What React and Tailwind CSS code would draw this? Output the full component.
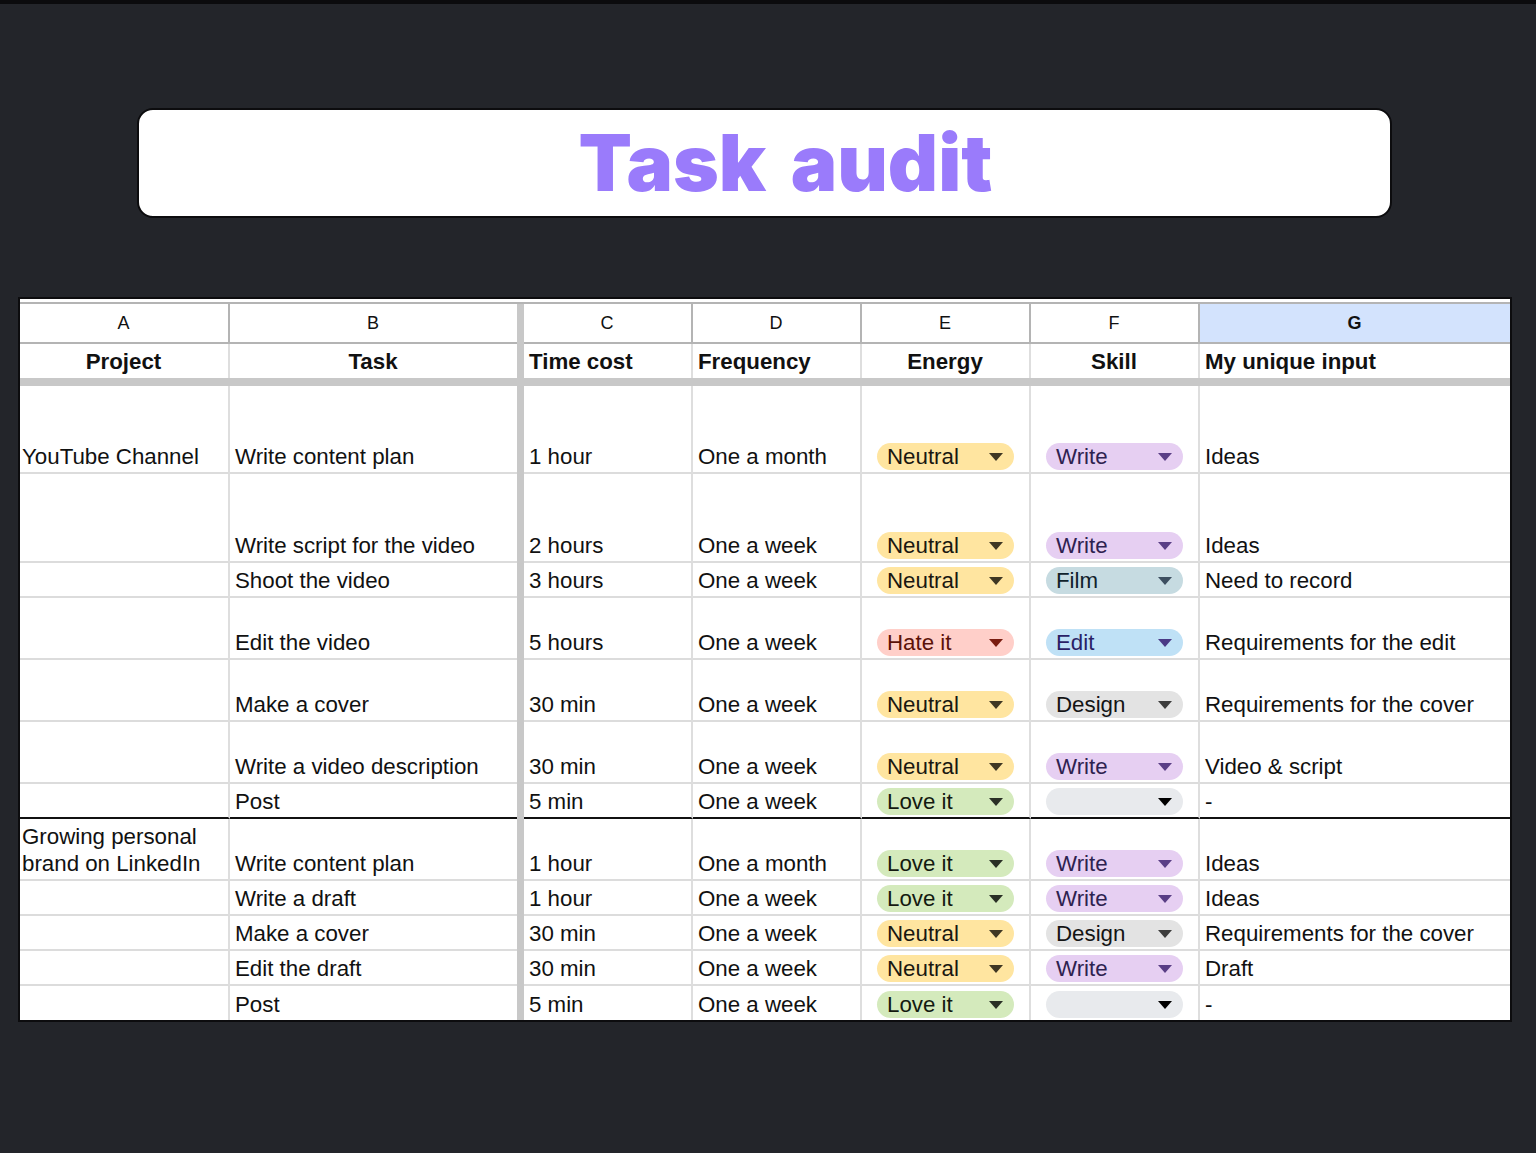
const chipStyles = {
  Neutral: { chip: "bg-[#ffe5a0] text-[#1a1710]", arrow: "#3f3723" },
  "Love it": { chip: "bg-[#d4eabc] text-[#141a10]", arrow: "#2a3026" },
  "Hate it": { chip: "bg-[#ffcfc9] text-[#5c1208]", arrow: "#7a1c10" },
  Write: { chip: "bg-[#e6cff2] text-[#2e2250]", arrow: "#5a3f86" },
  Film: { chip: "bg-[#c6dbe1] text-[#10222b]", arrow: "#3d4f60" },
  Edit: { chip: "bg-[#bfe1f6] text-[#2a1f66]", arrow: "#4a3a86" },
  Design: { chip: "bg-[#e3e3e3] text-[#141414]", arrow: "#3d3d3d" },
  "": { chip: "bg-[#e8eaed] text-[#000000]", arrow: "#000000" },
};

const rows = [
  { h: "h-[88px]", a: "YouTube Channel", b: "Write content plan", c: "1 hour", d: "One a month", e: "Neutral", f: "Write", g: "Ideas" },
  { h: "h-[89px]", a: "", b: "Write script for the video", c: "2 hours", d: "One a week", e: "Neutral", f: "Write", g: "Ideas" },
  { h: "h-[35px]", a: "", b: "Shoot the video", c: "3 hours", d: "One a week", e: "Neutral", f: "Film", g: "Need to record" },
  { h: "h-[62px]", a: "", b: "Edit the video", c: "5 hours", d: "One a week", e: "Hate it", f: "Edit", g: "Requirements for the edit" },
  { h: "h-[62px]", a: "", b: "Make a cover", c: "30 min", d: "One a week", e: "Neutral", f: "Design", g: "Requirements for the cover" },
  { h: "h-[62px]", a: "", b: "Write a video description", c: "30 min", d: "One a week", e: "Neutral", f: "Write", g: "Video & script" },
  { h: "h-[35px]", a: "", b: "Post", c: "5 min", d: "One a week", e: "Love it", f: "", g: "-", heavy: true },
  { h: "h-[62px]", a: "Growing personal brand on LinkedIn", b: "Write content plan", c: "1 hour", d: "One a month", e: "Love it", f: "Write", g: "Ideas" },
  { h: "h-[35px]", a: "", b: "Write a draft", c: "1 hour", d: "One a week", e: "Love it", f: "Write", g: "Ideas" },
  { h: "h-[35px]", a: "", b: "Make a cover", c: "30 min", d: "One a week", e: "Neutral", f: "Design", g: "Requirements for the cover" },
  { h: "h-[35px]", a: "", b: "Edit the draft", c: "30 min", d: "One a week", e: "Neutral", f: "Write", g: "Draft" },
  { h: "h-[34px]", a: "", b: "Post", c: "5 min", d: "One a week", e: "Love it", f: "", g: "-", last: true },
];

const W = {
  a: "w-[210px]",
  b: "w-[287px]",
  c: "w-[169px]",
  d: "w-[169px]",
  e: "w-[169px]",
  f: "w-[169px]",
  g: "flex-1",
};

function Divider() {
  return <div className="w-[7px] shrink-0 bg-[#c8c8c8]" />;
}

function Chip({ value }) {
  const s = chipStyles[value];
  return (
    <div className={`flex h-[27px] w-[137px] items-center justify-between rounded-full pl-[10px] pr-[11px] ${s.chip}`}>
      <span className="leading-[27px]">{value}</span>
      <svg width="14" height="8" viewBox="0 0 14 8" className="shrink-0">
        <path d="M0 0H14L7 8Z" fill={s.arrow} />
      </svg>
    </div>
  );
}

function Cell({ w, row, className = "", right = true, children }) {
  const bottom = row.last ? "" : row.heavy ? "border-b-2 border-b-[#111111]" : "border-b-2 border-b-[#dcdcdc]";
  return (
    <div className={`flex shrink-0 items-end ${w} ${bottom} ${right ? "border-r-2 border-r-[#dedede]" : ""} ${className}`}>
      {children}
    </div>
  );
}

function ColHead({ w, children, active, right = true }) {
  return (
    <div
      className={`flex shrink-0 items-center justify-center border-b-2 border-b-[#b4b4b4] pr-[1px] pt-[1px] text-[18px] ${w} ${right ? "border-r-2 border-r-[#b4b4b4]" : ""} ${active ? "bg-[#d3e3fd] font-bold" : ""}`}
    >
      {children}
    </div>
  );
}

function Head({ w, children, left, right = true }) {
  return (
    <div className={`flex shrink-0 items-center pt-[1px] font-bold ${w} ${right ? "border-r-2 border-r-[#dedede]" : ""} ${left ? "pl-[5px]" : "justify-center pr-[1px]"}`}>
      {children}
    </div>
  );
}

function Row({ row }) {
  return (
    <div className={`flex ${row.h}`}>
      <Cell w={W.a} row={row} className="pb-[2px] pl-[2px]">
        <span className="leading-[27px]">{row.a}</span>
      </Cell>
      <Cell w={W.b} row={row} right={false} className="pb-[2px] pl-[5px]">
        <span className="leading-[27px]">{row.b}</span>
      </Cell>
      <Divider />
      <Cell w={W.c} row={row} className="pb-[2px] pl-[5px]">
        <span className="leading-[27px]">{row.c}</span>
      </Cell>
      <Cell w={W.d} row={row} className="pb-[2px] pl-[5px]">
        <span className="leading-[27px]">{row.d}</span>
      </Cell>
      <Cell w={W.e} row={row} className="pb-[2px] pl-[15px]">
        <Chip value={row.e} />
      </Cell>
      <Cell w={W.f} row={row} className="pb-[2px] pl-[15px]">
        <Chip value={row.f} />
      </Cell>
      <Cell w={W.g} row={row} right={false} className="!shrink pb-[2px] pl-[5px]">
        <span className="leading-[27px]">{row.g}</span>
      </Cell>
    </div>
  );
}

export default function App() {
  return (
    <div className="h-[1153px] w-full overflow-hidden bg-[#23252a] font-['Liberation_Sans',Arial,sans-serif] text-[#111111]">
      <div className="h-[4px] bg-[#0b0b0d]" />
      <div className="ml-[137px] mt-[104px] flex h-[110px] w-[1255px] items-center justify-center rounded-[16px] border-2 border-[#0c0c0e] bg-white pl-[42px]">
        <h1 className="font-['Inter',sans-serif] text-[78px] font-black leading-none text-[#9a7bfb] [word-spacing:9px]">
          Task audit
        </h1>
      </div>
      <div className="ml-[18px] mt-[79px] w-[1494px] border-2 border-[#0c0c0e] bg-white pt-[3px] text-[22.3px]">
        <div className="border-t-2 border-t-[#b4b4b4]">
          <div className="flex h-[40px]">
            <ColHead w={W.a}>A</ColHead>
            <ColHead w={W.b} right={false}>B</ColHead>
            <Divider />
            <ColHead w={W.c}>C</ColHead>
            <ColHead w={W.d}>D</ColHead>
            <ColHead w={W.e}>E</ColHead>
            <ColHead w={W.f}>F</ColHead>
            <ColHead w="flex-1 !shrink" active right={false}>G</ColHead>
          </div>
          <div className="flex h-[34px]">
            <Head w={W.a}>Project</Head>
            <Head w={W.b} right={false}>Task</Head>
            <Divider />
            <Head w={W.c} left>Time cost</Head>
            <Head w={W.d} left>Frequency</Head>
            <Head w={W.e}>Energy</Head>
            <Head w={W.f}>Skill</Head>
            <Head w="flex-1 !shrink" left right={false}>My unique input</Head>
          </div>
          <div className="h-[8px] bg-[#c8c8c8]" />
          {rows.map((r, i) => (
            <Row key={i} row={r} />
          ))}
        </div>
      </div>
    </div>
  );
}
